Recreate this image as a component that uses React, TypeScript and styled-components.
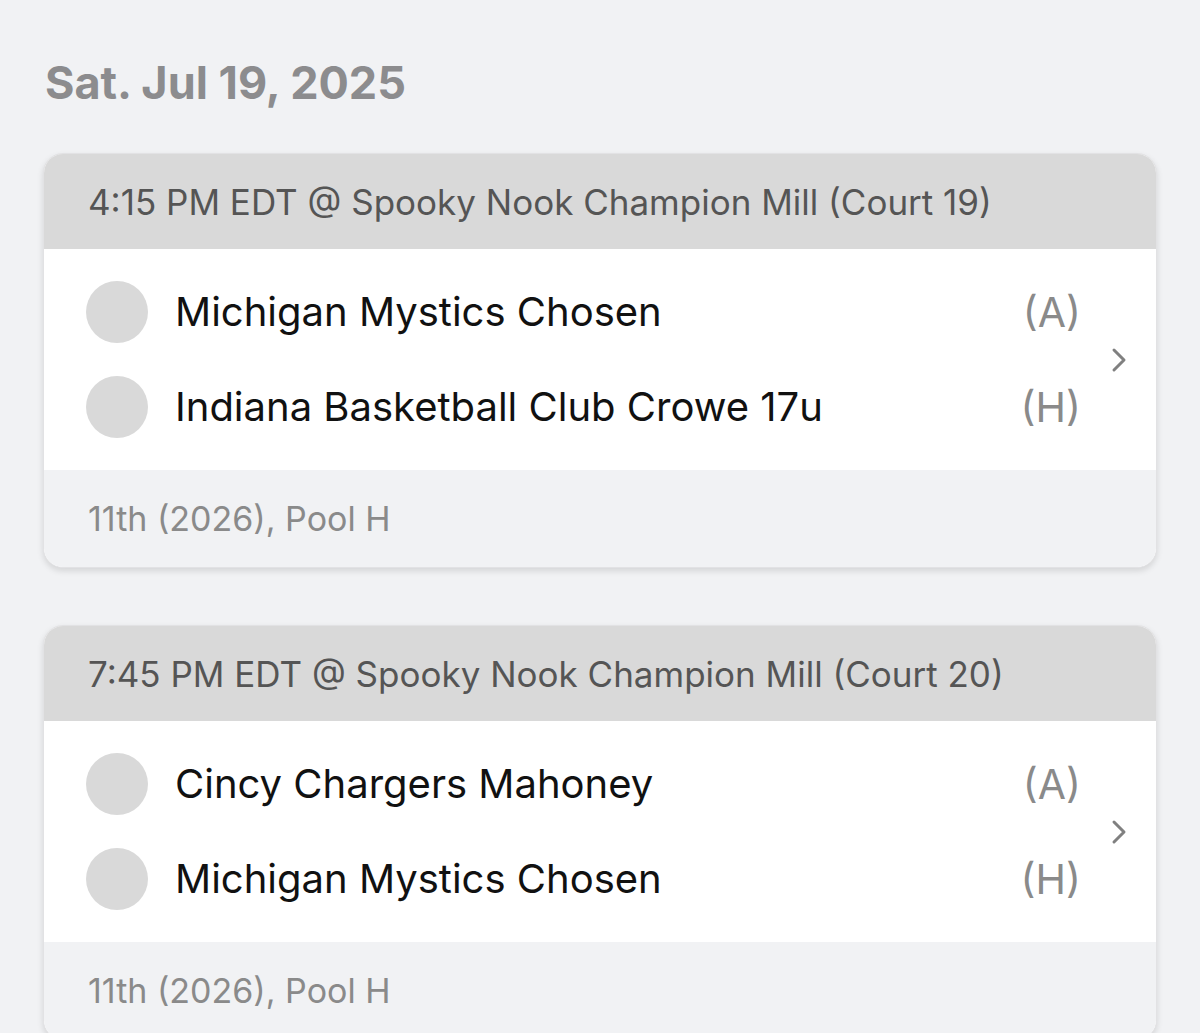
import React from "react";
import styled, { createGlobalStyle } from "styled-components";

const GlobalStyle = createGlobalStyle`
  html, body {
    margin: 0;
    padding: 0;
    background: #f1f2f4;
    font-family: Inter, "Noto Sans", sans-serif;
  }
`;

const Page = styled.div`
  padding: 55px 43px 0 43px;
  height: 1033px;
  box-sizing: border-box;
  overflow: hidden;
`;

const DateTitle = styled.h1`
  margin: 0 0 42px 2px;
  font-size: 45px;
  font-weight: 700;
  color: #8c8c8e;
  line-height: 56px;
`;

const CardList = styled.div`
  display: flex;
  flex-direction: column;
  gap: 57px;
`;

const Card = styled.div`
  border-radius: 20px;
  overflow: hidden;
  background: #fff;
  border: 1px solid #e2e2e4;
  box-shadow: 0 3px 6px rgba(0, 0, 0, 0.12);
`;

const CardHeader = styled.div`
  background: #d9d9d9;
  height: 95px;
  display: flex;
  align-items: center;
  padding: 0 44px;
  font-size: 35px;
  color: #555555;
`;

const Body = styled.div`
  display: flex;
  align-items: center;
  padding: 0 28px 0 42px;
  height: 221px;
  background: #fff;
`;

const Rows = styled.div`
  flex: 1;
  display: flex;
  flex-direction: column;
  gap: 33px;
`;

const Row = styled.div`
  display: flex;
  align-items: center;
  gap: 27px;
`;

const Avatar = styled.div`
  width: 62px;
  height: 62px;
  border-radius: 50%;
  background: #d9d9d9;
  flex-shrink: 0;
`;

const TeamName = styled.span`
  flex: 1;
  font-size: 40px;
  color: #111;
  line-height: 48px;
`;

const Side = styled.span`
  font-size: 41px;
  color: #8a8a8a;
  line-height: 48px;
  margin-right: 6px;
`;

const Chevron = styled.div`
  width: 41px;
  display: flex;
  justify-content: flex-end;
  color: #808080;
`;

const Footer = styled.div`
  background: #f1f2f4;
  height: 97px;
  display: flex;
  align-items: center;
  padding: 0 44px;
  font-size: 34px;
  color: #8a8a8a;
`;

type Game = {
  time: string;
  home: string;
  away: string;
  info: string;
};

const games: Game[] = [
  {
    time: "4:15 PM EDT @ Spooky Nook Champion Mill (Court 19)",
    away: "Michigan Mystics Chosen",
    home: "Indiana Basketball Club Crowe 17u",
    info: "11th (2026), Pool H",
  },
  {
    time: "7:45 PM EDT @ Spooky Nook Champion Mill (Court 20)",
    away: "Cincy Chargers Mahoney",
    home: "Michigan Mystics Chosen",
    info: "11th (2026), Pool H",
  },
];

const ChevronIcon = () => (
  <svg width="18" height="26" viewBox="0 0 18 26" fill="none">
    <path d="M4 3l10 10-10 10" stroke="currentColor" strokeWidth="3" strokeLinecap="round" strokeLinejoin="round" />
  </svg>
);

const App = () => (
  <>
    <GlobalStyle />
    <Page>
      <DateTitle>Sat. Jul 19, 2025</DateTitle>
      <CardList>
        {games.map((g) => (
          <Card key={g.time}>
            <CardHeader>{g.time}</CardHeader>
            <Body>
              <Rows>
                <Row>
                  <Avatar />
                  <TeamName>{g.away}</TeamName>
                  <Side>(A)</Side>
                </Row>
                <Row>
                  <Avatar />
                  <TeamName>{g.home}</TeamName>
                  <Side>(H)</Side>
                </Row>
              </Rows>
              <Chevron>
                <ChevronIcon />
              </Chevron>
            </Body>
            <Footer>{g.info}</Footer>
          </Card>
        ))}
      </CardList>
    </Page>
  </>
);

export default App;
